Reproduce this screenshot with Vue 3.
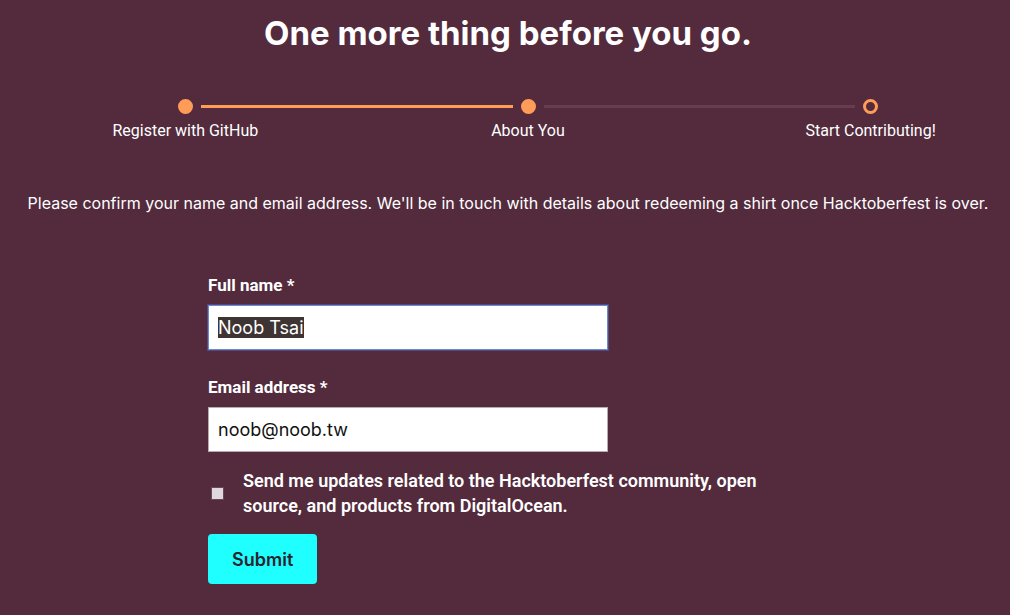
<script setup>
import { onMounted, ref } from 'vue'

const steps = [
  { label: 'Register with GitHub', state: 'done' },
  { label: 'About You', state: 'current' },
  { label: 'Start Contributing!', state: 'next' },
]

const fullName = ref('Noob Tsai')
const email = ref('noob@noob.tw')
const updates = ref(false)
const nameInput = ref(null)

onMounted(() => {
  nameInput.value.focus()
  nameInput.value.select()
})
</script>

<template>
  <main class="page">
    <h1 class="title">One more thing before you go.</h1>

    <ol class="steps">
      <li v-for="step in steps" :key="step.label" class="step" :class="step.state">
        <div class="track">
          <span class="line before"></span>
          <span class="dot"></span>
          <span class="line after"></span>
        </div>
        <span class="step-label">{{ step.label }}</span>
      </li>
    </ol>

    <p class="intro">
      Please confirm your name and email address. We'll be in touch with details about redeeming a shirt once Hacktoberfest is over.
    </p>

    <form class="form" @submit.prevent>
      <div class="field">
        <label for="full-name">Full name *</label>
        <input id="full-name" ref="nameInput" v-model="fullName" type="text" autocomplete="off" spellcheck="false" />
      </div>
      <div class="field">
        <label for="email">Email address *</label>
        <input id="email" v-model="email" type="email" autocomplete="off" />
      </div>
      <div class="consent">
        <input id="updates" v-model="updates" type="checkbox" />
        <label for="updates">Send me updates related to the Hacktoberfest community, open source, and products from DigitalOcean.</label>
      </div>
      <button class="submit" type="submit">Submit</button>
    </form>
  </main>
</template>

<style>
body {
  background: #532b3d;
}
</style>

<style scoped>
.page {
  box-sizing: border-box;
  min-height: 100vh;
  padding: 9px 8px 31px 14px;
  overflow: hidden;
  background: #532b3d;
  color: #fff;
  font-family: Inter, "Liberation Sans", sans-serif;
}

.title {
  margin: 0;
  font-size: 33px;
  line-height: 48px;
  font-weight: 700;
  text-align: center;
}

.steps {
  display: grid;
  grid-template-columns: repeat(3, 1fr);
  margin: 42px -40px 0 0;
  padding: 0;
  list-style: none;
}

.track {
  display: flex;
  align-items: center;
  gap: 8px;
}

.dot {
  box-sizing: border-box;
  width: 15px;
  height: 15px;
  border: 3px solid #ff9c57;
  border-radius: 50%;
  background: #ff9c57;
}

.next .dot {
  background: transparent;
}

.line {
  flex: 1;
  height: 3px;
  background: #ff9c57;
}

.current .after,
.next .line {
  background: #663c4e;
}

.step:first-child .before,
.step:last-child .after {
  background: transparent;
}

.step-label {
  display: block;
  margin-top: 5px;
  font-family: Roboto, "Liberation Sans", sans-serif;
  font-size: 16px;
  line-height: 24px;
  text-align: center;
}

.intro {
  margin: 46px 0 0;
  font-size: 16px;
  line-height: 28px;
  text-align: center;
}

.form {
  max-width: 600px;
  margin: 56px auto 0;
}

.field {
  display: flex;
  flex-direction: column;
}

.field + .field {
  margin-top: 25px;
}

.field label,
.consent label {
  font-family: Roboto, "Liberation Sans", sans-serif;
  font-size: 17px;
  line-height: 25px;
  font-weight: 700;
}

.consent label {
  font-size: 18px;
  font-weight: 600;
}

.field input {
  box-sizing: border-box;
  width: 400px;
  max-width: 100%;
  height: 45px;
  margin-top: 7px;
  padding: 0 9px;
  border: 1px solid #b9a9b0;
  border-radius: 0;
  outline: none;
  background: #fff;
  color: #111;
  font-family: Inter, "Liberation Sans", sans-serif;
  font-size: 18px;
  line-height: 23px;
}

.field input:focus {
  border-color: #6a8bd0;
  box-shadow: 0 0 0 1px #54487f;
}

.field input::selection {
  background: #3d3433;
  color: #fff;
}

.consent {
  display: flex;
  align-items: center;
  gap: 19px;
  max-width: 560px;
  margin-top: 16px;
}

.consent input {
  flex: none;
  appearance: none;
  width: 13px;
  height: 13px;
  margin: 0 0 0 3px;
  border: 1px solid #6b4858;
  background: #dfd8dc;
}

.submit {
  margin-top: 16px;
  padding: 2px 24px 0;
  border: 0;
  border-radius: 4px;
  background: #1fffff;
  color: #2b2430;
  font-family: Inter, "Liberation Sans", sans-serif;
  font-size: 18px;
  line-height: 48px;
  font-weight: 600;
}
</style>
